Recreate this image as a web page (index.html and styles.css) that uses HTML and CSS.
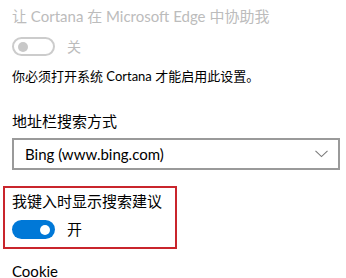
FILE: index.html
```html
<!DOCTYPE html>
<html lang="zh-CN">
<head>
<meta charset="utf-8">
<link rel="stylesheet" href="styles.css">
</head>
<body>
<div class="page">
  <div class="title disabled">让 Cortana 在 Microsoft Edge 中协助我</div>
  <div class="toggle-row first">
    <span class="toggle off"><span class="knob"></span></span>
    <span class="toggle-label disabled small">关</span>
  </div>
  <div class="note">你必须打开系统 Cortana 才能启用此设置。</div>
  <div class="title heading">地址栏搜索方式</div>
  <div class="select">
    <span class="select-text">Bing (www.bing.com)</span>
    <svg class="chevron" width="13" height="8" viewBox="0 0 13 8"><path d="M0.5 0.8 L6.5 6.6 L12.5 0.8" fill="none" stroke="#7a7a7a" stroke-width="1.1"/></svg>
  </div>
  <div class="highlight">
    <div class="title">我键入时显示搜索建议</div>
    <div class="toggle-row second">
      <span class="toggle on"><span class="knob"></span></span>
      <span class="toggle-label">开</span>
    </div>
  </div>
  <div class="title cookie">Cookie</div>
</div>
</body>
</html>
```

FILE: styles.css
```css
html, body {
  margin: 0;
  padding: 0;
  background: #ffffff;
}
body {
  width: 346px;
  height: 278px;
  overflow: hidden;
  font-family: "Lato", "Noto Sans CJK SC", sans-serif;
  color: #000000;
}
.page {
  padding: 6px 0 0 12px;
}
.title {
  font-size: 15px;
  line-height: 20px;
  white-space: nowrap;
}
.disabled {
  color: #bcbcbc;
}
.toggle-row {
  display: flex;
  align-items: center;
  height: 19px;
}
.toggle-row.first {
  margin-top: 11px;
}
.toggle {
  box-sizing: border-box;
  width: 43px;
  height: 19px;
  border-radius: 10px;
  display: flex;
  align-items: center;
  padding: 0 4px;
}
.toggle .knob {
  width: 10px;
  height: 10px;
  border-radius: 50%;
}
.toggle.off {
  border: 2px solid #cccccc;
}
.toggle.off .knob {
  background: #c8c8c8;
}
.toggle.on {
  background: #0078d7;
  justify-content: flex-end;
  padding-right: 5px;
}
.toggle.on .knob {
  background: #ffffff;
}
.toggle-label {
  margin-left: 12px;
  font-size: 15px;
  line-height: 19px;
}
.toggle-label.small {
  font-size: 14px;
}
.note {
  margin-top: 11px;
  font-size: 13px;
  line-height: 18px;
  white-space: nowrap;
}
.heading {
  margin-top: 26px;
}
.select {
  box-sizing: border-box;
  margin-top: 7px;
  width: 328px;
  height: 32px;
  border: 2px solid #9a9a9a;
  display: flex;
  align-items: center;
  justify-content: space-between;
  padding: 0 10px 0 11px;
}
.select-text {
  font-size: 15px;
  line-height: 20px;
}
.chevron {
  display: block;
}
.highlight {
  box-sizing: border-box;
  margin-top: 16px;
  margin-left: -9px;
  width: 174px;
  height: 63px;
  border: 2px solid #c9252c;
  padding: 3px 0 0 7px;
}
.toggle-row.second {
  margin-top: 9px;
}
.cookie {
  margin-top: 14px;
  line-height: 16px;
}
```
